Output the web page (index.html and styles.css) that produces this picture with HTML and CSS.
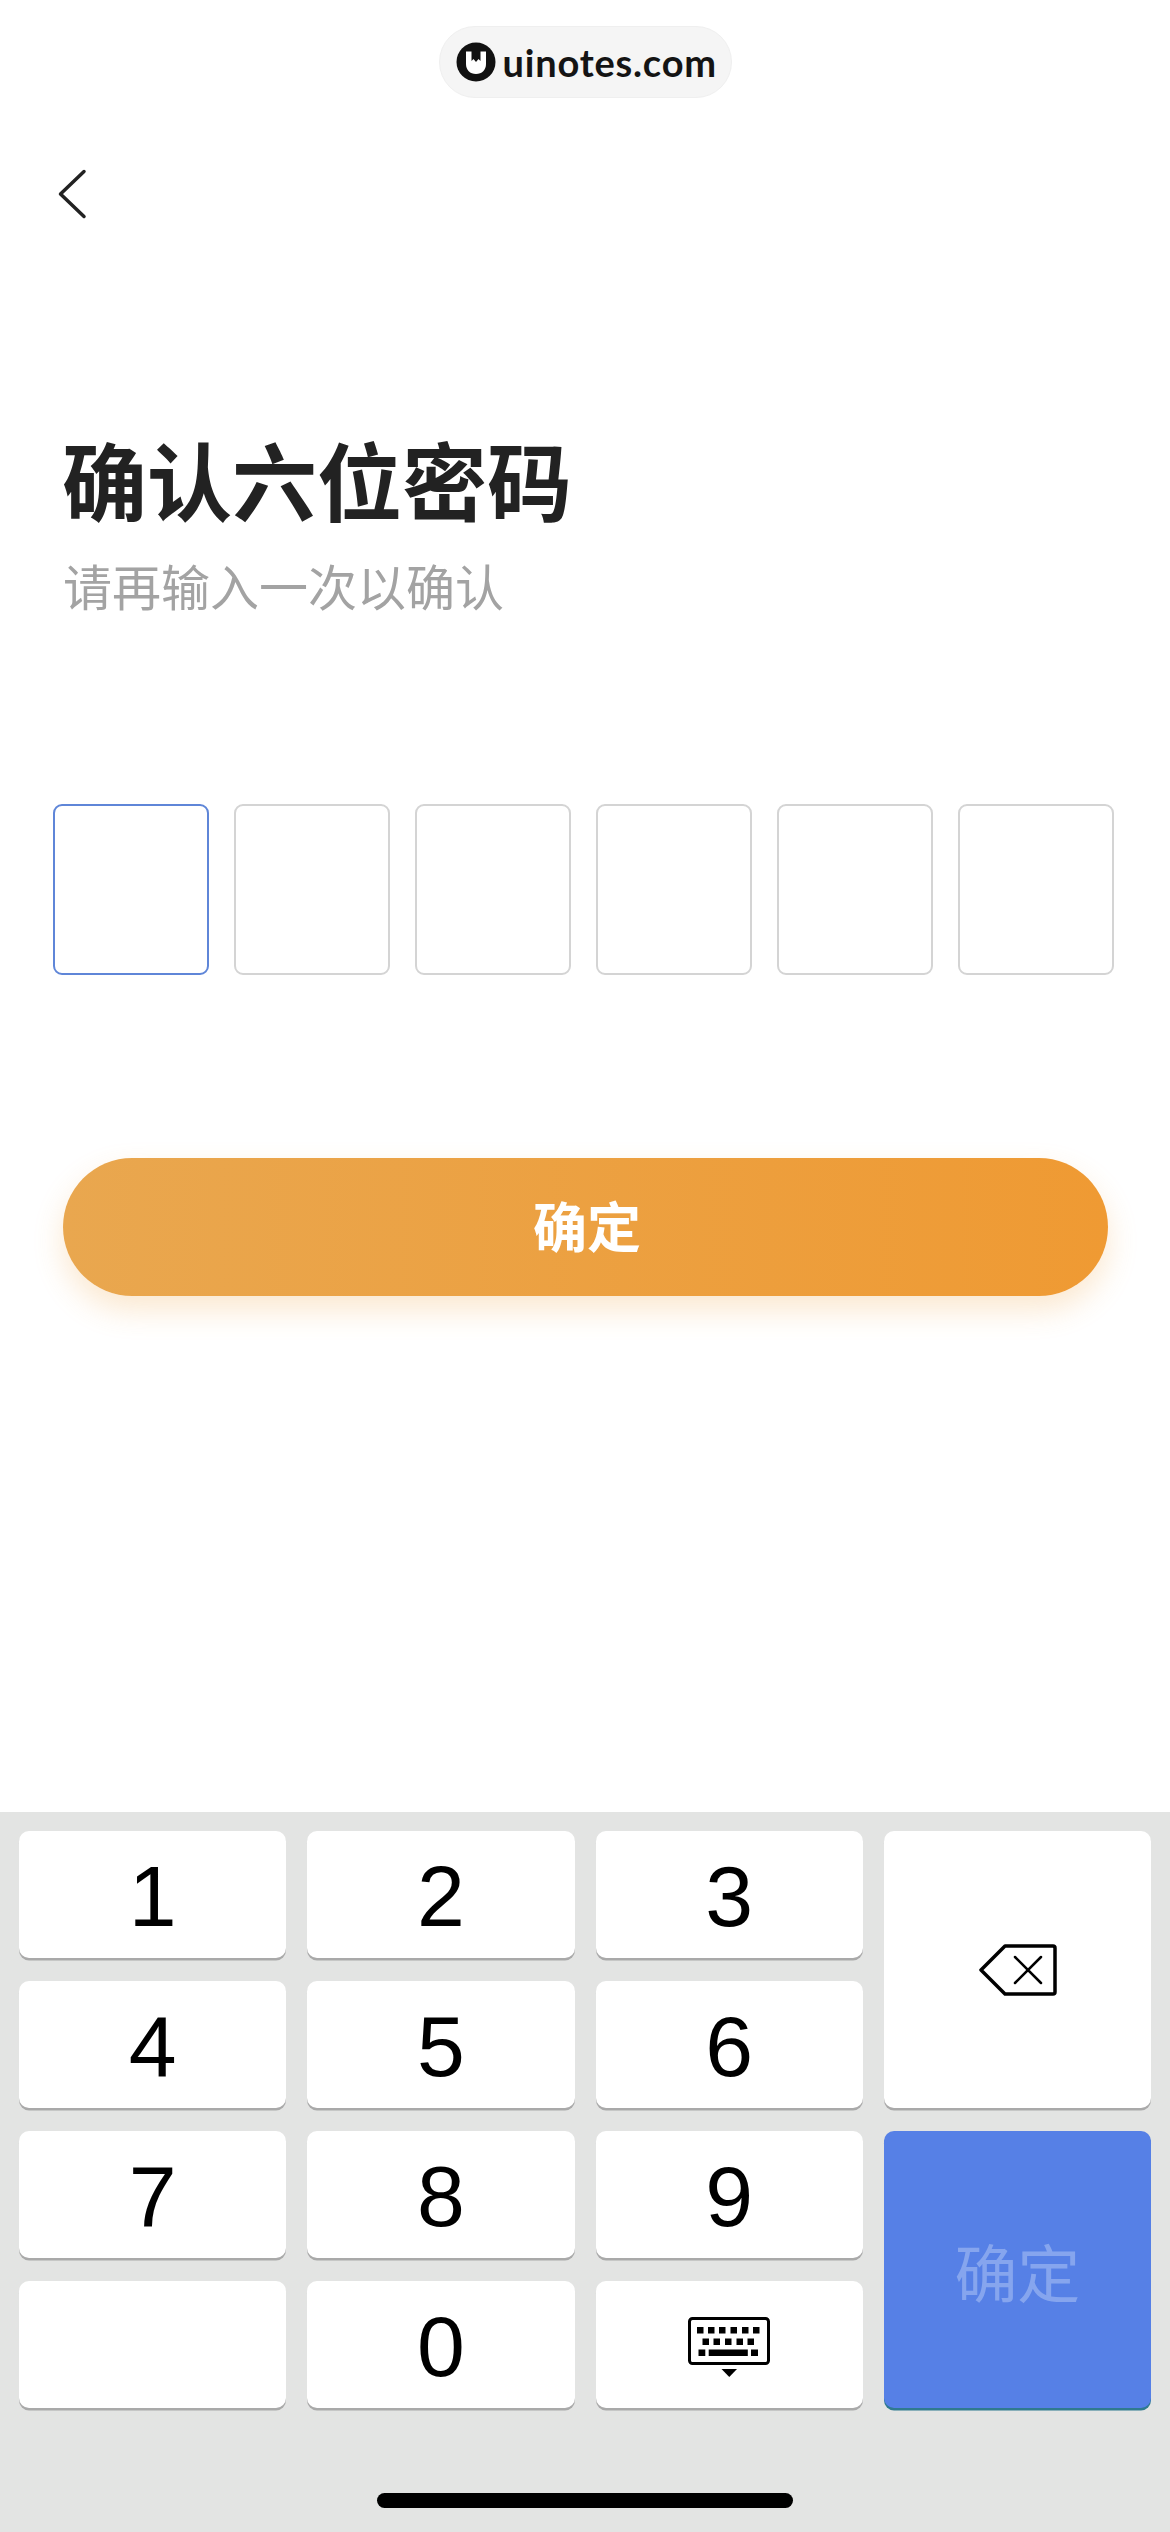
FILE: index.html
```html
<!DOCTYPE html>
<html lang="zh">
<head>
  <meta charset="utf-8">
  <title>确认六位密码</title>
  <link rel="stylesheet" href="styles.css">
</head>
<body>
  <div class="page">
    <div class="watermark">
      <div class="badge">
        <svg class="badge-logo" width="40" height="40" viewBox="0 0 40 40">
          <circle cx="20" cy="20" r="19.500" fill="#111"/>
          <path d="M10 9.500h5.500v9.500l2-2 2.500 3 2.500-3 2 2V9.500H30V22c0 6-4 10-10 10S10 28 10 22z" fill="#fff"/>
        </svg>
        <span class="badge-text">uinotes.com</span>
      </div>
    </div>

    <a class="back">
      <svg width="48" height="64" viewBox="0 0 48 64">
        <path d="M36 9.500 12.500 32 36 54.500" fill="none" stroke="#222" stroke-width="3.500" stroke-linecap="round" stroke-linejoin="round"/>
      </svg>
    </a>

    <div class="heading">
      <h1>确认六位密码</h1>
      <p>请再输入一次以确认</p>
    </div>

    <div class="code-boxes">
      <div class="code-box active"></div>
      <div class="code-box"></div>
      <div class="code-box"></div>
      <div class="code-box"></div>
      <div class="code-box"></div>
      <div class="code-box"></div>
    </div>

    <button class="submit">确定</button>

    <div class="keyboard">
      <div class="keys">
        <div class="key">1</div>
        <div class="key">2</div>
        <div class="key">3</div>
        <div class="key tall">
          <svg width="80" height="56" viewBox="0 0 80 56">
            <path d="M4 28 28 4h48a2 2 0 0 1 2 2v44a2 2 0 0 1-2 2H28z" fill="none" stroke="#000" stroke-width="3.500" stroke-linejoin="round"/>
            <path d="M38 15 64 41M64 15 38 41" fill="none" stroke="#000" stroke-width="2.500" stroke-linecap="round"/>
          </svg>
        </div>
        <div class="key">4</div>
        <div class="key">5</div>
        <div class="key">6</div>
        <div class="key">7</div>
        <div class="key">8</div>
        <div class="key">9</div>
        <div class="key tall confirm">确定</div>
        <div class="key"></div>
        <div class="key">0</div>
        <div class="key key-icon">
          <svg width="82" height="62" viewBox="0 0 82 62">
            <rect x="1.500" y="1.500" width="79" height="45" rx="3" fill="none" stroke="#000" stroke-width="3"/>
            <path d="M9 10h6.500v6.500H9zM20 10h6.500v6.500H20zM31 10h6.500v6.500H31zM42.500 10H49v6.500h-6.500zM54 10h6.500v6.500H54zM65 10h6.500v6.500H65zM14.500 21.500H21V28h-6.500zM25.500 21.500H32V28h-6.500zM37 21.500h6.500V28H37zM48.500 21.500H55V28h-6.500zM59.500 21.500H66V28h-6.500zM10.500 32.500h6.800V39h-6.800zM20.700 32.500h39.100V39H20.700zM63 32.500h7V39h-7z" fill="#000"/>
            <path d="M33.500 52h15.500l-7.750 8z" fill="#000"/>
          </svg>
        </div>
      </div>
      <div class="home-bar"></div>
    </div>
  </div>
</body>
</html>
```

FILE: styles.css
```css
* {
  box-sizing: border-box;
}

body {
  margin: 0;
  background: #fff;
  font-family: "Noto Sans CJK SC", "Liberation Sans", sans-serif;
}

.page {
  width: 1170px;
  height: 2532px;
  display: flex;
  flex-direction: column;
  overflow: hidden;
}

.watermark {
  display: flex;
  justify-content: center;
  padding-top: 26px;
}

.badge {
  width: 293px;
  height: 72px;
  display: flex;
  align-items: center;
  gap: 7px;
  padding-left: 16px;
  background: #f5f5f5;
  border: 1px solid #efefef;
  border-radius: 36px;
}

.badge-text {
  font-family: "Lato", sans-serif;
  font-size: 38px;
  font-weight: 700;
  letter-spacing: 0.8px;
  color: #141414;
}

.back {
  display: block;
  width: 48px;
  height: 64px;
  margin: 64px 0 0 48px;
}

.heading {
  padding: 0 0 0 62px;
  margin-top: 202px;
}

.heading h1 {
  margin: 0;
  font-size: 85px;
  line-height: 100px;
  font-weight: 700;
  color: #222;
}

.heading p {
  margin: 26px 0 0 1px;
  font-size: 49px;
  line-height: 62px;
  color: #a3a3a3;
}

.code-boxes {
  display: flex;
  gap: 25px;
  padding-left: 53px;
  margin-top: 188px;
}

.code-box {
  width: 156px;
  height: 171px;
  border: 2px solid #d4d4d4;
  border-radius: 9px;
}

.code-box.active {
  border-color: #5f86d8;
}

.submit {
  display: block;
  width: 1045px;
  height: 138px;
  margin: 183px 0 0 63px;
  padding: 0 0 6px 3px;
  border: none;
  border-radius: 69px;
  background: linear-gradient(90deg, #e9a74f, #ef9a33);
  box-shadow: 0 14px 30px rgba(240, 160, 60, 0.24);
  color: #fff;
  font-family: inherit;
  font-size: 54px;
  font-weight: 700;
}

.keyboard {
  height: 720px;
  margin-top: auto;
  display: flex;
  flex-direction: column;
  background: #e3e4e3;
  padding: 19px 19px 24px;
}

.keys {
  display: grid;
  grid-template-columns: repeat(4, 1fr);
  grid-auto-rows: 127px;
  gap: 23px 21px;
}

.key {
  display: flex;
  align-items: center;
  justify-content: center;
  padding-top: 3px;
  background: #fff;
  border-radius: 10px;
  box-shadow: 0 2.500px 0 #a9a9a9;
  font-family: "Liberation Sans", sans-serif;
  font-size: 86px;
  color: #000;
}

.key.tall,
.key.key-icon {
  padding-top: 0;
}

.key.tall {
  grid-row: span 2;
}

.key.key-icon svg {
  margin-top: 7px;
}

.key.confirm {
  background: #5680e6;
  box-shadow: 0 2.500px 0 #2f7a90;
  font-family: "Noto Sans CJK SC", sans-serif;
  font-size: 63px;
  color: #86a5ee;
}

.home-bar {
  width: 416px;
  height: 15px;
  margin: auto auto 0;
  background: #000;
  border-radius: 8px;
}
```
